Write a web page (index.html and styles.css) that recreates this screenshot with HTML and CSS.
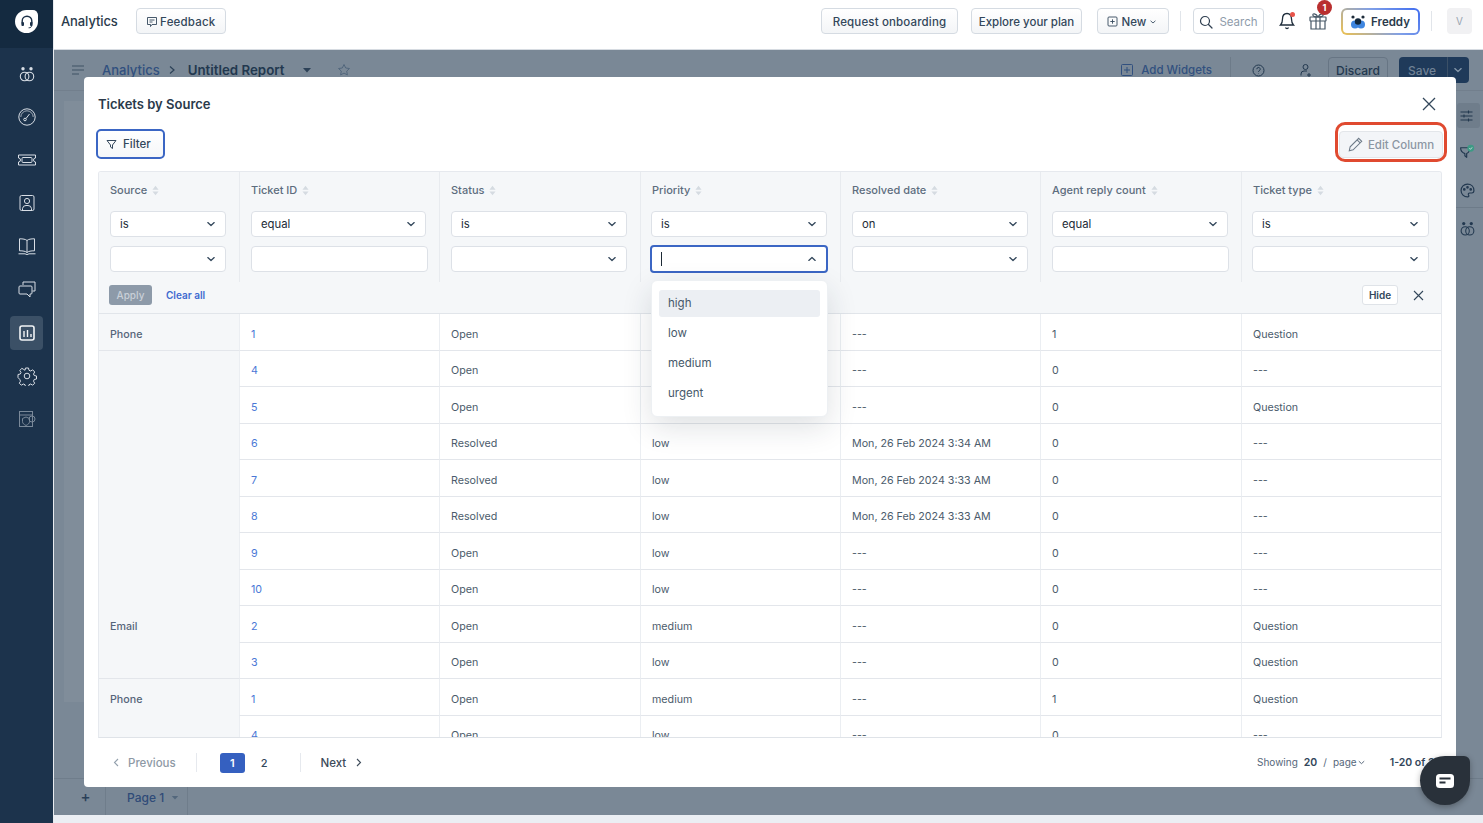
FILE: index.html
```html
<!DOCTYPE html>
<html lang="en">
<head>
<meta charset="utf-8">
<title>Analytics</title>
<link rel="stylesheet" href="styles.css">
</head>
<body>
<svg class="defs" width="0" height="0" aria-hidden="true">
  <defs>
    <symbol id="chev" viewBox="0 0 12 12"><path d="M2.8 4.600 6 7.500l3.200-2.900" fill="none" stroke="currentColor" stroke-width="1.300" stroke-linecap="round" stroke-linejoin="round"/></symbol>
    <symbol id="sort" viewBox="0 0 8 12"><path d="M4 .5 7.500 5H.5zM4 11.500.5 7h7z" fill="currentColor"/></symbol>
    <symbol id="venn" viewBox="0 0 20 20"><g fill="none" stroke="currentColor" stroke-width="1.100"><circle cx="7.600" cy="12.500" r="4.300"/><circle cx="12.400" cy="12.500" r="4.300"/></g><circle cx="6" cy="4.800" r="1.700" fill="currentColor"/><circle cx="14" cy="4.800" r="1.700" fill="currentColor"/></symbol>
  </defs>
</svg>
<div class="app">
  <nav class="sidebar">
    <div class="logo-box"><div class="logo"><svg width="16" height="16" viewBox="0 0 16 16" fill="none" stroke="#1b3048" stroke-width="1.400" stroke-linecap="round"><path d="M3.200 9V7a4.800 4.800 0 0 1 9.600 0v2"/><rect x="2.400" y="8" width="2.600" height="4" rx="1" fill="#1b3048" stroke="none"/><rect x="11" y="8" width="2.600" height="4" rx="1" fill="#1b3048" stroke="none"/><path d="M12.500 12c0 1.300-1 1.800-2.500 1.800" stroke-width="1"/></svg></div></div>
    <div class="nav-list">
      <div class="nav-item"><svg class="nav-ic" viewBox="0 0 20 20"><use href="#venn"/></svg></div>
      <div class="nav-item"><svg class="nav-ic" viewBox="0 0 20 20" fill="none" stroke="currentColor" stroke-width="1"><circle cx="10" cy="10" r="8.200"/><path d="M3.800 10a6.200 6.200 0 0 1 12.400 0" stroke-width=".7"/><circle cx="8" cy="12.500" r="1.300"/><path d="M9 11.500l3.500-4.500"/></svg></div>
      <div class="nav-item"><svg class="nav-ic" viewBox="0 0 20 20" fill="none" stroke="currentColor" stroke-width="1"><path d="M1.500 5h17v3a2 2 0 0 0 0 4v3h-17v-3a2 2 0 0 0 0-4z"/><rect x="5" y="7.500" width="10" height="5" rx="1"/></svg></div>
      <div class="nav-item"><svg class="nav-ic" viewBox="0 0 20 20" fill="none" stroke="currentColor" stroke-width="1"><rect x="3" y="2.500" width="14" height="15" rx="1.500"/><circle cx="10" cy="8" r="2.600"/><path d="M5.500 17.500v-2a3.500 3.500 0 0 1 3.500-3h2a3.500 3.500 0 0 1 3.500 3v2"/></svg></div>
      <div class="nav-item"><svg class="nav-ic" viewBox="0 0 20 20" fill="none" stroke="currentColor" stroke-width="1"><path d="M10 4.500C8.500 3.200 6 2.800 2.500 2.800v12c3.500 0 6 .4 7.500 1.700 1.500-1.300 4-1.700 7.500-1.700v-12c-3.500 0-6 .4-7.500 1.700zM10 4.500v12"/><path d="M1.500 17.800h6.500l2 .8 2-.8h6.500"/></svg></div>
      <div class="nav-item"><svg class="nav-ic" viewBox="0 0 20 20" fill="none" stroke="currentColor" stroke-width="1"><path d="M6 6V3h12v9h-2.500"/><path d="M2 8a1 1 0 0 1 1-1h11a1 1 0 0 1 1 1v6a1 1 0 0 1-1 1h-1v3l-3-3H3a1 1 0 0 1-1-1z"/></svg></div>
      <div class="nav-item nav-active"><svg class="nav-ic" viewBox="0 0 20 20" fill="none" stroke="currentColor" stroke-width="1.600"><rect x="3" y="3" width="14" height="14" rx="2"/><path d="M7 14V8M10.500 14v-7M14 14v-3" stroke-width="1.400"/></svg></div>
      <div class="nav-item"><svg class="nav-ic" viewBox="0 0 20 20" fill="none" stroke="currentColor" stroke-width="1"><circle cx="10" cy="10" r="2.800"/><path d="M8.500 2h3l.5 2.300 1.700.7 2-1.200 2 2.200-1.200 2 .7 1.500 2.300.5v3l-2.300.5-.7 1.700 1.200 2-2 2-2-1.200-1.700.7-.5 2.300h-3l-.5-2.300-1.700-.7-2 1.200-2-2 1.200-2-.7-1.700L1 11.500v-3l2.300-.5.7-1.500-1.200-2 2-2.200 2 1.200L8 4.300z"/></svg></div>
      <div class="nav-item"><svg class="nav-ic dim" viewBox="0 0 20 20" fill="none" stroke="currentColor" stroke-width="1"><rect x="2.500" y="2.500" width="13" height="15"/><path d="M2.500 6h13"/><path d="M9 8l3.500 1.500v3c0 2-1.500 3-3.500 4-2-1-3.500-2-3.500-4v-3z"/><circle cx="15" cy="10" r="3"/></svg></div>
    </div>
  </nav>
  <div class="main">
    <header class="topbar">
      <span class="app-name">Analytics</span>
      <button class="btn btn-feedback"><svg width="12" height="12" viewBox="0 0 12 12" fill="none" stroke="currentColor" stroke-width=".9"><path d="M1.500 1.500h9v7H6L4.500 10.500v-2h-3z"/><path d="M3.500 4h5M3.500 6h3"/></svg>Feedback</button>
      <div class="top-right">
        <button class="btn btn-req">Request onboarding</button>
        <button class="btn btn-plan">Explore your plan</button>
        <button class="btn btn-new"><svg width="11" height="11" viewBox="0 0 11 11" fill="none" stroke="currentColor" stroke-width=".9"><rect x="1" y="1" width="9" height="9" rx="1"/><path d="M5.500 3.300v4.400M3.300 5.500h4.400"/></svg>New<svg class="chev-sm" width="8" height="8"><use href="#chev"/></svg></button>
        <span class="sep sep-a"></span>
        <button class="btn btn-search"><svg width="14" height="14" viewBox="0 0 14 14" fill="none" stroke="#2f3f50" stroke-width="1.200"><circle cx="6" cy="6" r="4.500"/><path d="M9.500 9.500 13 13" stroke-linecap="round"/></svg><span>Search</span></button>
        <div class="bell"><svg width="18" height="20" viewBox="0 0 18 20" fill="none" stroke="#1f2d3b" stroke-width="1.300"><path d="M9 2.500c-3 0-4.500 2.500-4.500 5.500 0 3-1 5-2 6h13c-1-1-2-3-2-6 0-3-1.500-5.500-4.500-5.500z"/><path d="M7.500 16.500a1.600 1.600 0 0 0 3 0"/></svg><i class="bell-dot"></i></div>
        <div class="gift"><svg width="20" height="20" viewBox="0 0 20 20" fill="none" stroke="#475867" stroke-width="1.200"><rect x="2" y="6" width="16" height="4" rx=".5"/><path d="M3 10v8h14v-8M8 6v12M12 6v12"/><path d="M10 6C8 2 4 2 5 4.500 5.500 6 8 6 10 6zm0 0c2-4 6-4 5-1.500C14.500 6 12 6 10 6z"/></svg><span class="gift-badge">1</span></div>
        <button class="freddy"><svg width="16" height="14" viewBox="0 0 16 14"><circle cx="3" cy="2" r="1.600" fill="#1f2d3b"/><circle cx="13" cy="2" r="1.600" fill="#1f2d3b"/><circle cx="5" cy="9.500" r="4" fill="#3f86e0"/><circle cx="11" cy="9.500" r="4" fill="#3f86e0"/><circle cx="8" cy="6.500" r="3.200" fill="#12283d"/></svg>Freddy</button>
        <span class="sep sep-b"></span>
        <div class="avatar">V</div>
      </div>
    </header>
    <div class="page">
      <div class="pagehead">
        <svg class="ph-menu" width="14" height="12" viewBox="0 0 14 12" fill="none" stroke="currentColor" stroke-width="1.200"><path d="M1 2h12M1 6h12M1 10h7"/></svg>
        <span class="crumb">Analytics</span>
        <svg class="crumb-sep" width="8" height="10" viewBox="0 0 8 10" fill="none" stroke="currentColor" stroke-width="1.200"><path d="M2 1.500 6 5 2 8.500"/></svg>
        <span class="report">Untitled Report</span>
        <svg class="caret" width="10" height="6" viewBox="0 0 10 6"><path d="M1 1h8L5 5.500z" fill="currentColor"/></svg>
        <svg class="star" width="14" height="14" viewBox="0 0 14 14" fill="none" stroke="currentColor" stroke-width="1"><path d="M7 1.500 8.700 5l3.800.5-2.800 2.600.7 3.800L7 10.100l-3.400 1.800.7-3.800L1.500 5.500 5.300 5z"/></svg>
        <div class="ph-right">
          <svg class="ph-add" width="12" height="12" viewBox="0 0 12 12" fill="none" stroke="currentColor" stroke-width="1"><rect x=".5" y=".5" width="11" height="11" rx="1"/><path d="M6 3v6M3 6h6"/></svg>
          <span class="ph-addtext">Add Widgets</span>
          <span class="ph-sep"></span>
          <svg class="ph-help" width="13" height="13" viewBox="0 0 13 13" fill="none" stroke="#22384f" stroke-width="1"><circle cx="6.500" cy="6.500" r="5.500"/><path d="M4.800 5.200a1.700 1.700 0 1 1 2.500 1.500c-.5.300-.8.600-.8 1.200M6.500 9.500v.4"/></svg>
          <svg class="ph-user" width="13" height="14" viewBox="0 0 13 14" fill="none" stroke="#22384f" stroke-width="1"><circle cx="5.500" cy="4" r="2.500"/><path d="M1 12.500v-1.500a3 3 0 0 1 3-3h3M9 10v4M7 12h4"/></svg>
          <span class="ph-discard">Discard</span>
          <div class="ph-save"><span>Save</span><i></i><svg width="12" height="12"><use href="#chev"/></svg></div>
        </div>
      </div>
      <div class="pagebody">
        <div class="gutter"><div class="canvas"></div></div>
        <div class="rail">
          <div class="rail-box"><svg width="15" height="12" viewBox="0 0 14 12" fill="none" stroke="currentColor" stroke-width="1.100"><path d="M1 2h12M1 6h12M1 10h12"/><path d="M9 .500v3M4.500 4.500v3M9 8.500v3"/></svg></div>
          <div class="rail-ic ri-a"><svg width="16" height="16" viewBox="0 0 15 15" fill="none" stroke="currentColor" stroke-width="1.100"><path d="M1.500 3.500h8c.8 2.500-.5 4.500-2.300 5.500v3.500L5.500 11V9C3 8 1.500 6 1.500 3.500z" stroke-linejoin="round"/><circle cx="11" cy="4" r="3.200" fill="#3e9a85" stroke="none"/><path d="M9.700 4l1 1 1.600-1.800" stroke="#dfe7ea" stroke-width=".8"/></svg></div>
          <div class="rail-ic ri-b"><svg width="15" height="15" viewBox="0 0 14 14" fill="none" stroke="currentColor" stroke-width="1.100"><path d="M7 1a6 6 0 1 0 0 12c1.500 0 1.500-1 1-1.700-.6-1 0-2 1-2h2c1.500 0 2-1 2-2.300C13 3.500 10.500 1 7 1z"/><circle cx="4" cy="6" r=".7"/><circle cx="7" cy="4" r=".7"/><circle cx="10" cy="6" r=".7"/></svg></div>
          <div class="rail-line"></div>
          <div class="rail-ic ri-c"><svg width="19" height="19" viewBox="0 0 20 20"><use href="#venn"/></svg></div>
        </div>
      </div>
      <div class="pagetabs">
        <span class="tab-add">+</span>
        <div class="tab"><span>Page 1</span><svg width="8" height="5" viewBox="0 0 10 6"><path d="M1 1h8L5 5.500z" fill="currentColor"/></svg></div>
      </div>

      <section class="modal">
        <div class="modal-head">
          <h2 class="modal-title">Tickets by Source</h2>
          <svg class="modal-close" width="14" height="14" viewBox="0 0 14 14" fill="none" stroke="#33475b" stroke-width="1.300"><path d="M1 1l12 12M13 1 1 13"/></svg>
        </div>
        <div class="modal-tools">
          <button class="btn-filter"><svg width="11" height="11" viewBox="0 0 11 11" fill="none" stroke="currentColor" stroke-width="1"><path d="M1 1.500h9L6.500 6v3.500L4.500 8V6z" stroke-linejoin="round"/></svg>Filter</button>
          <button class="btn-edit"><svg width="15" height="15" viewBox="0 0 14 14" fill="none" stroke="currentColor" stroke-width="1"><path d="M10 1.200 12.800 4 4.800 12 1.200 12.800 2 9.200zM8.500 2.700l2.800 2.800"/></svg>Edit Column</button>
          <div class="edit-ring"></div>
        </div>
        <div class="table-wrap">
          <div class="filters">
            <div class="fcol">
              <div class="flabel">Source<svg class="sort" width="7" height="11"><use href="#sort"/></svg></div>
              <div class="field w116">is<svg width="12" height="12"><use href="#chev"/></svg></div>
              <div class="field w116"><svg width="12" height="12"><use href="#chev"/></svg></div>
            </div>
            <div class="fcol">
              <div class="flabel">Ticket ID<svg class="sort" width="7" height="11"><use href="#sort"/></svg></div>
              <div class="field w175">equal<svg width="12" height="12"><use href="#chev"/></svg></div>
              <div class="field w177"></div>
            </div>
            <div class="fcol">
              <div class="flabel">Status<svg class="sort" width="7" height="11"><use href="#sort"/></svg></div>
              <div class="field w176">is<svg width="12" height="12"><use href="#chev"/></svg></div>
              <div class="field w176"><svg width="12" height="12"><use href="#chev"/></svg></div>
            </div>
            <div class="fcol tight">
              <div class="flabel">Priority<svg class="sort" width="7" height="11"><use href="#sort"/></svg></div>
              <div class="field w176">is<svg width="12" height="12"><use href="#chev"/></svg></div>
              <div class="field w176 focus"><i class="cursor"></i><svg class="up" width="12" height="12"><use href="#chev"/></svg>
                <ul class="menu">
                  <li class="menu-on">high</li>
                  <li>low</li>
                  <li>medium</li>
                  <li>urgent</li>
                </ul>
              </div>
            </div>
            <div class="fcol">
              <div class="flabel">Resolved date<svg class="sort" width="7" height="11"><use href="#sort"/></svg></div>
              <div class="field w176">on<svg width="12" height="12"><use href="#chev"/></svg></div>
              <div class="field w176"><svg width="12" height="12"><use href="#chev"/></svg></div>
            </div>
            <div class="fcol">
              <div class="flabel">Agent reply count<svg class="sort" width="7" height="11"><use href="#sort"/></svg></div>
              <div class="field w176">equal<svg width="12" height="12"><use href="#chev"/></svg></div>
              <div class="field w177"></div>
            </div>
            <div class="fcol tight">
              <div class="flabel">Ticket type<svg class="sort" width="7" height="11"><use href="#sort"/></svg></div>
              <div class="field w177">is<svg width="12" height="12"><use href="#chev"/></svg></div>
              <div class="field w177"><svg width="12" height="12"><use href="#chev"/></svg></div>
            </div>
          </div>
          <div class="actions">
            <button class="btn-apply">Apply</button>
            <span class="clear">Clear all</span>
            <button class="btn-hide">Hide</button>
            <svg class="act-x" width="11" height="11" viewBox="0 0 11 11" fill="none" stroke="#33475b" stroke-width="1.100"><path d="M1 1l9 9M10 1 1 10"/></svg>
          </div>
          <div class="tbody">
            <div class="src end">Phone</div><div class="c link">1</div><div class="c">Open</div><div class="c"></div><div class="c">---</div><div class="c">1</div><div class="c">Question</div>
            <div class="src"></div><div class="c link">4</div><div class="c">Open</div><div class="c"></div><div class="c">---</div><div class="c">0</div><div class="c">---</div>
            <div class="src"></div><div class="c link">5</div><div class="c">Open</div><div class="c"></div><div class="c">---</div><div class="c">0</div><div class="c">Question</div>
            <div class="src"></div><div class="c link">6</div><div class="c">Resolved</div><div class="c">low</div><div class="c">Mon, 26 Feb 2024 3:34 AM</div><div class="c">0</div><div class="c">---</div>
            <div class="src"></div><div class="c link">7</div><div class="c">Resolved</div><div class="c">low</div><div class="c">Mon, 26 Feb 2024 3:33 AM</div><div class="c">0</div><div class="c">---</div>
            <div class="src"></div><div class="c link">8</div><div class="c">Resolved</div><div class="c">low</div><div class="c">Mon, 26 Feb 2024 3:33 AM</div><div class="c">0</div><div class="c">---</div>
            <div class="src"></div><div class="c link">9</div><div class="c">Open</div><div class="c">low</div><div class="c">---</div><div class="c">0</div><div class="c">---</div>
            <div class="src"></div><div class="c link">10</div><div class="c">Open</div><div class="c">low</div><div class="c">---</div><div class="c">0</div><div class="c">---</div>
            <div class="src">Email</div><div class="c link">2</div><div class="c">Open</div><div class="c">medium</div><div class="c">---</div><div class="c">0</div><div class="c">Question</div>
            <div class="src end"></div><div class="c link">3</div><div class="c">Open</div><div class="c">low</div><div class="c">---</div><div class="c">0</div><div class="c">Question</div>
            <div class="src">Phone</div><div class="c link">1</div><div class="c">Open</div><div class="c">medium</div><div class="c">---</div><div class="c">1</div><div class="c">Question</div>
            <div class="src"></div><div class="c link">4</div><div class="c">Open</div><div class="c">low</div><div class="c">---</div><div class="c">0</div><div class="c">---</div>
          </div>
        </div>
        <footer class="pager">
          <svg class="pg-left" width="6" height="9" viewBox="0 0 6 9" fill="none" stroke="currentColor" stroke-width="1.100"><path d="M5 1 1.500 4.500 5 8"/></svg>
          <span class="pg-prev">Previous</span>
          <span class="pg-sep sep1"></span>
          <span class="pg-cur">1</span>
          <span class="pg-num">2</span>
          <span class="pg-sep sep2"></span>
          <span class="pg-next">Next</span>
          <svg class="pg-right" width="6" height="9" viewBox="0 0 6 9" fill="none" stroke="currentColor" stroke-width="1.100"><path d="M1 1l3.500 3.500L1 8"/></svg>
          <div class="pg-info">
            <span>Showing</span><b>20</b><span class="slash">/</span><span class="perpage">page<svg width="9" height="9"><use href="#chev"/></svg></span><b class="range">1-20 of 28</b>
          </div>
        </footer>
      </section>
    </div>
    <div class="strip"></div>
  </div>
</div>
<div class="chat"><svg width="20" height="16" viewBox="0 0 20 16"><rect x="1" y="1" width="18" height="14" rx="3.500" fill="#fff"/><path d="M4.500 5.500h11M4.500 9.500h6" stroke="#29313a" stroke-width="1.800"/></svg></div>
</body>
</html>
```
FILE: styles.css
```css
* { box-sizing: border-box; }
html, body { margin: 0; padding: 0; width: 1483px; height: 823px; overflow: hidden; }
body { font-family: Inter, "Liberation Sans", sans-serif; background: #fff; color: #33475b; position: relative; }
button { font-family: inherit; }
.defs { position: absolute; }
.app { display: flex; height: 823px; }

/* sidebar */
.sidebar { width: 53px; flex: none; background: #1c334c; display: flex; flex-direction: column; }
.logo-box { height: 48px; background: #142a40; display: flex; align-items: center; justify-content: center; }
.logo { width: 23px; height: 23px; background: #fff; border-radius: 50% 22% 50% 50%; display: flex; align-items: center; justify-content: center; margin-top: -5px; }
.nav-list { display: flex; flex-direction: column; align-items: center; padding-top: 9px; gap: 9.1px; }
.nav-item { width: 33px; height: 34px; display: flex; align-items: center; justify-content: center; border-radius: 4px; color: #d8dee5; }
.nav-active { background: #3b5066; color: #f2f4f6; }
.nav-ic { width: 20px; height: 20px; }
.dim { opacity: .5; }

/* top bar */
.main { flex: 1; min-width: 0; display: flex; flex-direction: column; border-left: 1px solid #e8ebef; }
.topbar { height: 50px; flex: none; display: flex; align-items: flex-start; background: #fff; border-bottom: 1px solid #d6dbe1; padding: 8px 11px 0 7px; }
.app-name { font-size: 13px; font-weight: 500; color: #2a3a4b; line-height: 27px; letter-spacing: -.1px; }
.btn { height: 26px; border: 1px solid #d5dbe2; border-radius: 4px; background: linear-gradient(#fff, #f3f5f7); color: #33475b; font-size: 11.5px; font-weight: 500; padding: 1px 0 0; display: flex; align-items: center; justify-content: center; white-space: nowrap; }
.btn-feedback { width: 90px; margin-left: 18px; gap: 2px; letter-spacing: .2px; }
.top-right { margin-left: auto; display: flex; align-items: flex-start; position: relative; }
.btn-req { width: 137px; letter-spacing: .15px; }
.btn-plan { width: 111px; margin-left: 13px; }
.btn-new { width: 72px; margin-left: 15px; gap: 4px; padding-right: 2px; }
.chev-sm { margin-left: -1px; }
.sep { width: 1px; height: 20px; background: #e1e5ea; margin-top: 3px; }
.sep-a { margin-left: 11px; }
.btn-search { width: 71px; margin-left: 12px; background: #fff; gap: 6px; color: #8f9cab; font-weight: 400; }
.bell { width: 18px; height: 20px; margin-left: 14px; margin-top: 3px; position: relative; }
.bell-dot { position: absolute; top: 1px; right: 1px; width: 5px; height: 5px; background: #e8544a; border-radius: 50%; }
.gift { width: 20px; height: 20px; margin-left: 12px; margin-top: 3px; position: relative; }
.gift-badge { position: absolute; top: -11px; left: 9px; width: 15px; height: 15px; border-radius: 50%; background: #b92f2f; color: #fff; font-size: 9px; font-weight: 700; text-align: center; line-height: 15px; }
.freddy { width: 79px; height: 27px; margin-left: 13px; border: 2px solid transparent; border-radius: 6px; background: linear-gradient(#fff, #fff) padding-box, linear-gradient(40deg, #f0c24c, #7f9fe8 55%, #3f6cf0) border-box; color: #2a3a4b; font-size: 11.5px; font-weight: 600; display: flex; align-items: center; justify-content: center; gap: 5px; padding: 0 1px 0 0; }
.sep-b { margin-left: 11px; }
.avatar { width: 25px; height: 26px; margin-left: 15px; background: #f1f1f3; border-radius: 4px; color: #9aa5b1; font-size: 10px; display: flex; align-items: center; justify-content: center; }

/* dimmed page behind */
.page { flex: 1; min-height: 0; position: relative; display: flex; flex-direction: column; background: #7a8896; }
.pagehead { height: 41px; flex: none; display: flex; align-items: center; padding: 0 14px 0 17px; border-bottom: 1px solid #727f8d; color: #2f4b78; }
.ph-menu { color: #3f5264; margin-right: 17px; }
.crumb { font-size: 13px; font-weight: 500; color: #31507f; }
.crumb-sep { color: #2c4157; margin: 0 12px 0 8px; }
.report { font-size: 13.3px; font-weight: 600; color: #22384f; }
.caret { color: #2c4157; margin-left: 18px; }
.star { color: #51667c; margin-left: 25px; }
.ph-right { margin-left: auto; display: flex; align-items: center; }
.ph-add { color: #31507f; margin-right: 8px; }
.ph-addtext { font-size: 11.5px; font-weight: 500; color: #31507f; }
.ph-sep { width: 1px; height: 26px; background: #6d7b89; margin: 0 21px 0 18px; }
.ph-help { margin-right: 35px; }
.ph-user { margin-right: 15px; }
.ph-discard { width: 60px; height: 26px; border: 1px solid #677584; border-radius: 4px; font-size: 12px; font-weight: 500; color: #22384f; display: flex; align-items: center; justify-content: center; margin-right: 11px; }
.ph-save { width: 70px; height: 26px; background: #1f3a5a; border-radius: 4px; color: #6f8195; font-size: 12px; font-weight: 500; display: flex; align-items: center; justify-content: space-between; padding: 0 5px 0 9px; }
.ph-save i { width: 1px; height: 26px; background: #3b5067; margin-left: 6px; }
.ph-save svg { color: #8698aa; }
.pagebody { flex: 1; min-height: 0; display: flex; }
.gutter { flex: 1; padding: 10px 0 76px 10px; }
.canvas { width: 100%; height: 100%; background: #808d9a; }
.rail { width: 27px; flex: none; display: flex; flex-direction: column; align-items: center; padding: 12px 5px 0 0; color: #22384f; }
.rail-box { width: 23px; height: 25px; margin-left: 2px; padding-right: 3px; background: #6f7d8b; border-radius: 3px; display: flex; align-items: center; justify-content: center; }
.rail-ic { display: flex; align-items: center; justify-content: center; flex: none; }
.ri-a { height: 48px; }
.ri-b { height: 28px; }
.ri-c { height: 40px; }
.rail-line { width: 27px; margin: 3px -5px 0 0; height: 1px; background: #6d7b89; flex: none; }
.pagetabs { height: 37px; flex: none; display: flex; border-top: 1px solid #6f7d8b; }
.tab-add { width: 52px; color: #2a4058; font-size: 15px; font-weight: 500; text-align: center; line-height: 35px; padding-left: 12px; border-right: 1px solid #6f7d8b; }
.tab { width: 82px; display: flex; align-items: center; gap: 7px; padding-left: 21px; border-right: 1px solid #6f7d8b; color: #2f4b78; font-size: 12px; font-weight: 500; }
.tab svg { color: #53677c; }
.strip { height: 8px; flex: none; background: #ebeef3; }

/* modal */
.modal { position: absolute; top: 27px; left: 30px; width: 1372px; height: 710px; background: #fff; border-radius: 4px; display: flex; flex-direction: column; }
.modal-head { height: 52px; flex: none; display: flex; align-items: center; justify-content: space-between; padding: 2px 20px 0 14px; }
.modal-title { margin: 0; font-size: 13px; font-weight: 600; color: #2a3a4b; }
.modal-tools { height: 30px; flex: none; display: flex; justify-content: space-between; padding: 0 13px 0 12px; position: relative; margin-bottom: 12px; }
.btn-filter { width: 69px; height: 30px; border: 2px solid #3b66c4; border-radius: 5px; background: linear-gradient(#fff, #f5f7f9); color: #33475b; font-size: 11.5px; font-weight: 500; display: flex; align-items: center; gap: 6px; padding: 0 0 0 8px; }
.btn-edit { width: 104px; height: 27px; margin-top: 2px; border: 1px solid #e3e6ea; border-radius: 4px; background: #f3f5f8; color: #8b96a3; font-size: 11.5px; font-weight: 500; display: flex; align-items: center; justify-content: center; gap: 5px; padding: 0; }
.btn-edit svg { color: #6d7a88; }
.edit-ring { position: absolute; top: -7px; right: 9px; width: 112px; height: 40px; border: 3.500px solid #e04a30; border-radius: 10px; }

/* filter table */
.table-wrap { flex: 1; min-height: 0; margin: 0 14px; border: 1px solid #e6e9ee; border-bottom-color: #dfe3e8; display: flex; flex-direction: column; overflow: hidden; border-radius: 3px 3px 0 0; }
.filters, .tbody { display: grid; grid-template-columns: 140px 200px 201px 200px 200px 201px 200px; flex: none; }
.filters { height: 108px; background: #f5f7f9; position: relative; z-index: 2; }
.fcol { padding: 0 0 0 11px; border-left: 1px solid #e8ebef; position: relative; }
.fcol:first-child { border-left: 0; padding-left: 11px; }
.fcol.tight { padding-left: 10px; }
.flabel { height: 39px; padding-top: 12px; font-size: 11px; font-weight: 500; color: #5d6d7e; line-height: 13px; display: flex; align-items: flex-start; gap: 5px; white-space: nowrap; }
.tight .flabel { padding-left: 1px; }
.sort { color: #d5dbe1; margin-top: 1px; flex: none; }
.field { height: 26px; margin-bottom: 9px; background: #fff; border: 1px solid #dde1e7; border-radius: 4px; font-size: 11.300px; color: #1d2a36; display: flex; align-items: center; justify-content: space-between; padding: 0 8px 0 9px; position: relative; }
.field svg { color: #33475b; margin-left: auto; }
.w116 { width: 116px; }
.w175 { width: 175px; }
.w176 { width: 176px; }
.w177 { width: 177px; }
.focus { border: 2px solid #3b66c4; margin-left: -1px; width: 178px; height: 28px; margin-top: -1px; }
.cursor { width: 1px; height: 14px; background: #1d2a36; }
.up { transform: rotate(180deg); }
.menu { position: absolute; top: 33px; left: -1px; width: 177px; height: 137px; margin: 0; padding: 9px 7px; list-style: none; background: #fff; border: 1px solid #edf0f3; border-radius: 6px; box-shadow: 0 10px 30px rgba(30, 45, 60, .14); font-size: 11.500px; color: #46586a; z-index: 5; }
.menu li { height: 27px; padding-left: 9px; line-height: 27px; margin-bottom: 3px; border-radius: 3px; }
.menu-on { background: #eceff3; }
.actions { height: 34px; flex: none; display: flex; align-items: center; padding: 0 17px 3px 10px; background: #f5f7f9; border-bottom: 1px solid #e1e5ea; position: relative; }
.btn-apply { width: 43px; height: 20px; border: 0; border-radius: 3px; background: #8d9aa9; color: #c9d0d8; font-size: 10px; font-weight: 500; padding: 0; }
.clear { margin-left: 14px; font-size: 10px; font-weight: 600; color: #3f6bd0; }
.btn-hide { margin-left: auto; width: 36px; height: 20px; border: 1px solid #dfe3e8; border-radius: 3px; background: #fff; color: #33475b; font-size: 10px; font-weight: 600; padding: 0; }
.act-x { margin-left: 15px; }
.tbody { grid-auto-rows: 36.5px; flex: 1; min-height: 0; overflow: hidden; }
.c, .src { font-size: 10.700px; padding: 5px 0 0 11px; display: flex; align-items: center; color: #4b5b6b; white-space: nowrap; }
.c { border-left: 1px solid #ebeef2; border-bottom: 1px solid #e3e6eb; }
.src { background: #f5f7f9; font-weight: 500; color: #56657a; padding-left: 11px; }
.src.end { border-bottom: 1px solid #e3e6eb; }
.link { color: #4a78d6; }

/* pager */
.pager { height: 49px; flex: none; display: flex; align-items: center; padding: 0 0 0 29px; font-size: 11.500px; position: relative; }
.pg-left { color: #93a0ad; }
.pg-prev { margin-left: 9px; color: #8e99a5; font-weight: 500; }
.pg-sep { width: 1px; height: 19px; background: #e6e9ee; }
.sep1 { margin-left: 20px; }
.pg-cur { width: 25px; height: 20px; margin-left: 23px; background: #3560c0; border-radius: 3px; color: #fff; font-size: 11px; font-weight: 600; text-align: center; line-height: 20px; }
.pg-num { margin-left: 16px; font-size: 11px; font-weight: 500; color: #33475b; }
.sep2 { margin-left: 32px; }
.pg-next { margin-left: 20px; font-weight: 500; color: #3d4b5a; }
.pg-right { margin-left: 10px; color: #3d4b5a; }
.pg-info { margin-left: auto; display: flex; align-items: baseline; font-size: 10px; color: #56677a; white-space: nowrap; width: 199px; overflow: hidden; }
.pg-info b { margin-left: 6px; color: #33475b; font-size: 10.500px; font-weight: 600; }
.slash { margin-left: 6px; }
.perpage { margin-left: 6px; display: flex; align-items: center; }
.pg-info b.range { margin-left: 24px; }

/* chat launcher */
.chat { position: absolute; left: 1420px; top: 756px; width: 50px; height: 49px; background: #29313a; border-radius: 50% 12% 50% 50%; display: flex; align-items: center; justify-content: center; box-shadow: 0 2px 6px rgba(0, 0, 0, .3); z-index: 10; }
```
